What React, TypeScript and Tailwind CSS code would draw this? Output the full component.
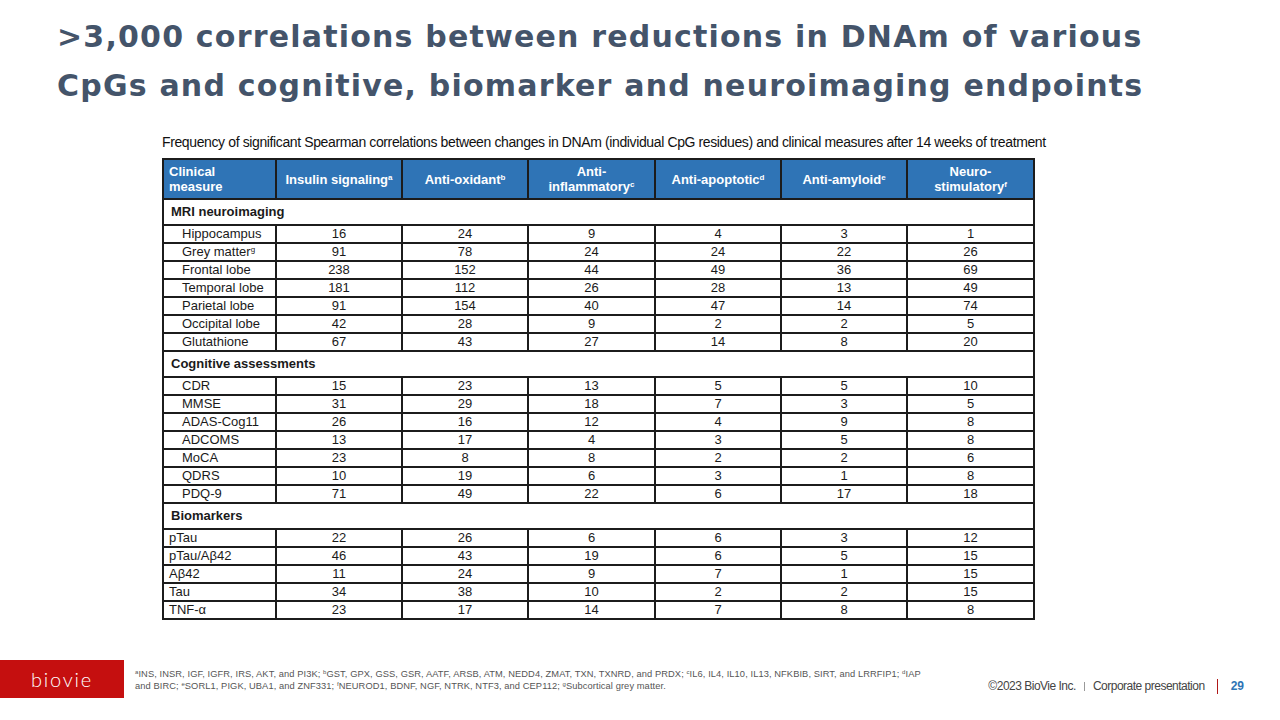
import React from "react";

type Row = [string, number[], string?];

const sections: { title: string; indent: boolean; rows: Row[] }[] = [
  {
    title: "MRI neuroimaging",
    indent: true,
    rows: [
      ["Hippocampus", [16, 24, 9, 4, 3, 1]],
      ["Grey matter", [91, 78, 24, 24, 22, 26], "g"],
      ["Frontal lobe", [238, 152, 44, 49, 36, 69]],
      ["Temporal lobe", [181, 112, 26, 28, 13, 49]],
      ["Parietal lobe", [91, 154, 40, 47, 14, 74]],
      ["Occipital lobe", [42, 28, 9, 2, 2, 5]],
      ["Glutathione", [67, 43, 27, 14, 8, 20]],
    ],
  },
  {
    title: "Cognitive assessments",
    indent: true,
    rows: [
      ["CDR", [15, 23, 13, 5, 5, 10]],
      ["MMSE", [31, 29, 18, 7, 3, 5]],
      ["ADAS-Cog11", [26, 16, 12, 4, 9, 8]],
      ["ADCOMS", [13, 17, 4, 3, 5, 8]],
      ["MoCA", [23, 8, 8, 2, 2, 6]],
      ["QDRS", [10, 19, 6, 3, 1, 8]],
      ["PDQ-9", [71, 49, 22, 6, 17, 18]],
    ],
  },
  {
    title: "Biomarkers",
    indent: false,
    rows: [
      ["pTau", [22, 26, 6, 6, 3, 12]],
      ["pTau/Aβ42", [46, 43, 19, 6, 5, 15]],
      ["Aβ42", [11, 24, 9, 7, 1, 15]],
      ["Tau", [34, 38, 10, 2, 2, 15]],
      ["TNF-α", [23, 17, 14, 7, 8, 8]],
    ],
  },
];

const Sup = ({ c }: { c: string }) => (
  <sup className="text-[8px] relative top-[-4px] align-baseline leading-none">{c}</sup>
);

const FSup = ({ c }: { c: string }) => (
  <sup className="text-[6px] relative top-[-3px] align-baseline">{c}</sup>
);

export default function App() {
  const th = "border-2 border-[#1c1c1c] bg-[#2f74b6] text-white font-bold text-[13px] leading-[15px] text-center align-middle";
  const td = "border-2 border-[#1c1c1c] text-[13px] leading-[14px] text-center text-[#1a1a1a] h-[18px] p-0";
  return (
    <div
      className="w-[1280px] h-[720px] bg-white relative overflow-hidden flex flex-col"
      style={{ fontFamily: '"Liberation Sans", Arial, sans-serif' }}
    >
      <h1
        className="pl-[57px] pt-[12px] text-[30px] leading-[49px] font-bold text-[#44546a] tracking-[1.2px]"
        style={{ fontFamily: '"DejaVu Sans", "Liberation Sans", sans-serif' }}
      >
        &gt;3,000 correlations between reductions in DNAm of various
        <br />
        CpGs and cognitive, biomarker and neuroimaging endpoints
      </h1>

      <div className="ml-[162px] mt-[24px] text-[14px] leading-[16px] text-[#111] tracking-[-0.38px]">
        Frequency of significant Spearman correlations between changes in DNAm (individual CpG residues) and clinical measures after 14 weeks of treatment
      </div>

      <table className="ml-[162px] mt-[8px] w-[871px] border-collapse table-fixed">
        <colgroup>
          <col className="w-[113px]" />
          <col className="w-[126px]" />
          <col className="w-[126px]" />
          <col className="w-[127px]" />
          <col className="w-[126px]" />
          <col className="w-[126px]" />
          <col className="w-[127px]" />
        </colgroup>
        <thead>
          <tr className="h-[40px]">
            <th className={th + " text-left pl-[5px]"}>
              Clinical
              <br />
              measure
            </th>
            <th className={th}>
              Insulin signaling<Sup c="a" />
            </th>
            <th className={th}>
              Anti-oxidant<Sup c="b" />
            </th>
            <th className={th}>
              Anti-
              <br />
              inflammatory<Sup c="c" />
            </th>
            <th className={th}>
              Anti-apoptotic<Sup c="d" />
            </th>
            <th className={th}>
              Anti-amyloid<Sup c="e" />
            </th>
            <th className={th}>
              Neuro-
              <br />
              stimulatory<Sup c="f" />
            </th>
          </tr>
        </thead>
        <tbody>
          {sections.map((s) => (
            <React.Fragment key={s.title}>
              <tr className="h-[26px]">
                <td
                  colSpan={7}
                  className="border-2 border-[#1c1c1c] text-left pl-[7px] font-bold text-[13px] text-[#1a1a1a] p-0"
                >
                  {s.title}
                </td>
              </tr>
              {s.rows.map(([name, vals, sup]) => (
                <tr key={name} className="h-[18px]">
                  <td
                    className={td + (s.indent ? " pl-[18px]" : " pl-[5px]")}
                    style={{ textAlign: "left" }}
                  >
                    {name}
                    {sup ? <Sup c={sup} /> : null}
                  </td>
                  {vals.map((v, i) => (
                    <td key={i} className={td}>
                      {v}
                    </td>
                  ))}
                </tr>
              ))}
            </React.Fragment>
          ))}
        </tbody>
      </table>

      <div className="mt-auto mb-[22px] flex items-center h-[38px]">
        <div className="w-[124px] h-[38px] bg-[#c50f0f] flex items-center justify-center">
          <span
            className="text-white text-[20px] font-light tracking-[1.8px] leading-none"
            style={{ fontFamily: 'Lato, "Open Sans", sans-serif' }}
          >
            biovie
          </span>
        </div>
        <div className="ml-[11px] pt-[2px] text-[9.3px] leading-[12px] text-[#555] tracking-[0.09px]">
          <FSup c="a" />INS, INSR, IGF, IGFR, IRS, AKT, and PI3K; <FSup c="b" />GST, GPX, GSS, GSR, AATF, ARSB, ATM, NEDD4, ZMAT, TXN, TXNRD, and PRDX; <FSup c="c" />IL6, IL4, IL10, IL13, NFKBIB, SIRT, and LRRFIP1; <FSup c="d" />IAP
          <br />
          and BIRC; <FSup c="e" />SORL1, PIGK, UBA1, and ZNF331; <FSup c="f" />NEUROD1, BDNF, NGF, NTRK, NTF3, and CEP112; <FSup c="g" />Subcortical grey matter.
        </div>
        <div className="ml-auto mr-[36px] flex items-center pt-[14px] text-[12px] text-[#444] tracking-[-0.5px]">
          <span>©2023 BioVie Inc.</span>
          <span className="mx-[8px] w-px h-[9px] bg-[#999]" />
          <span>Corporate presentation</span>
          <span className="ml-[12px] mr-[13px] w-px h-[15px] bg-[#b01818]" />
          <span className="text-[#2f74b6] font-bold text-[12px] tracking-normal">29</span>
        </div>
      </div>
    </div>
  );
}
